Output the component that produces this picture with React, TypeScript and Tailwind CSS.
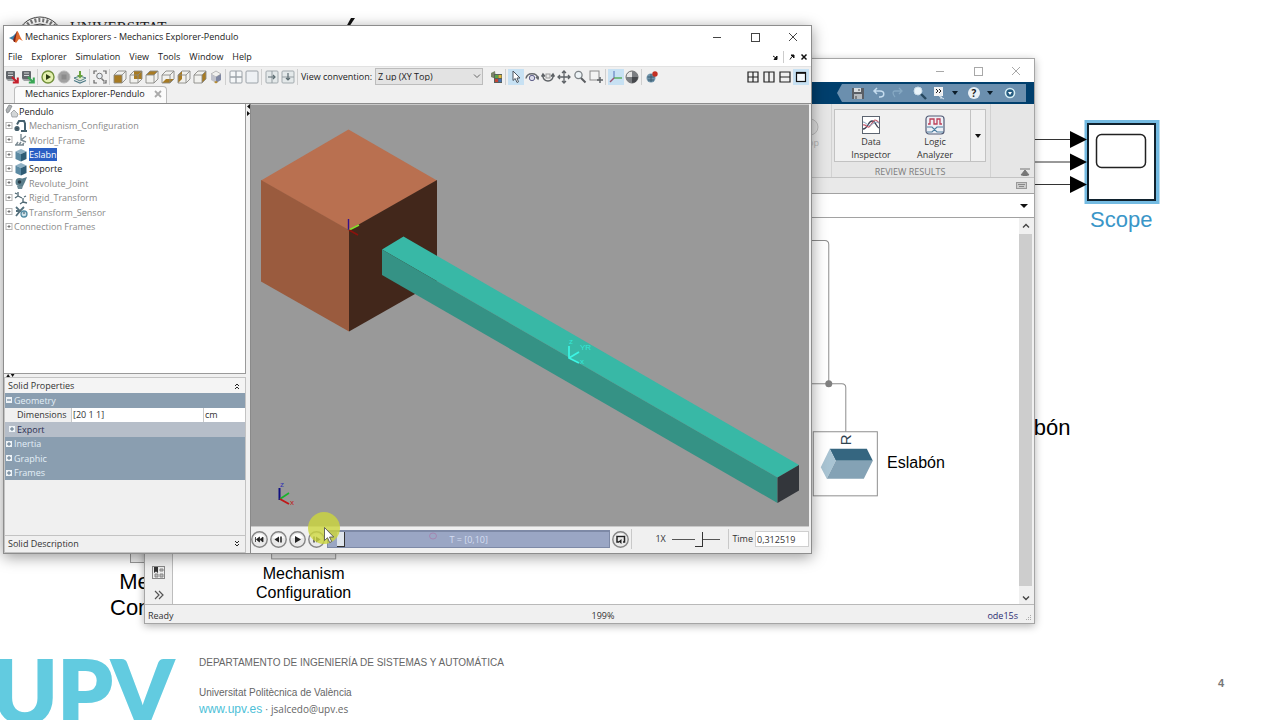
import React from "react";

const uiFont = "font-['Open_Sans','Noto_Sans',sans-serif]";

/* ---------- small building blocks ---------- */

function Tool({ label, active, children }: { label: string; active?: boolean; children: React.ReactNode }) {
  return (
    <button
      type="button"
      aria-label={label}
      className={
        active
          ? "size-3.5 shrink-0 bg-[#c7e1f3] shadow-[0_0_0_1px_#c7e1f3]"
          : "size-3.5 shrink-0"
      }
    >
      <svg viewBox="0 0 14 14" className="block size-3.5" fill="none">
        {children}
      </svg>
    </button>
  );
}

function Sep() {
  return <span className="h-4 w-0.5 shrink-0 border-l border-[#cfcfcf]" />;
}

function ViewCube({ face }: { face: "front" | "back" | "top" | "bottom" | "left" | "right" }) {
  const gold = "#a87b22";
  const shape = {
    front: "1,5 9,5 9,13 1,13",
    back: "5,1 13,1 13,9 5,9",
    top: "1,5 5,1 13,1 9,5",
    bottom: "1,13 5,9 13,9 9,13",
    left: "1,5 5,1 5,9 1,13",
    right: "9,5 13,1 13,9 9,13",
  }[face];
  return (
    <g>
      <path d="M1 5 5 1H13V9L9 13H1Z" fill="#f1f1ee" />
      <polygon points={shape} fill={gold} />
      <path d="M1 5H9V13H1ZM1 5 5 1H13V9L9 13M9 5 13 1" stroke="#8b8a86" strokeWidth=".9" />
    </g>
  );
}

function SaveBlock({ red }: { red?: boolean }) {
  return (
    <g>
      <rect x="1" y="1" width="9" height="8" rx="1" fill="#62666b" />
      <path d="M3 3h5M3 5.5h5" stroke="#d4d6d8" />
      <path d="M1 9h8l2 2H3Z" fill="#9ea1a3" />
      {red ? (
        <path d="m7 7 5 5m.8-4.5v5h-5" stroke="#c5202c" strokeWidth="2" />
      ) : (
        <path d="m7 7 5 5m.8-4.5v5h-5" stroke="#3aa655" strokeWidth="2" />
      )}
    </g>
  );
}

function Expander() {
  return (
    <svg viewBox="0 0 8 8" className="size-2 shrink-0" fill="none">
      <rect x="1" y=".5" width="6" height="6" fill="#fff" stroke="#b5b5b5" />
      <path d="M2.500 3.500h3M4 2v3" stroke="#6c6c6c" strokeWidth=".9" />
    </svg>
  );
}

function MatlabMark() {
  return (
    <svg viewBox="0 0 14 14" className="size-3.5 shrink-0">
      <path d="M0 8 4 6 6 4 8 2 7 8 4 10Z" fill="#3c7fa8" />
      <path d="M4 10 8 1 10 5 7 12 5 12Z" fill="#7c2018" />
      <path d="M8 1C10 2 11 8 14 11L10 9 7 13 6 12Z" fill="#e0692b" />
    </svg>
  );
}

function WindowButtons({ faded }: { faded?: boolean }) {
  const tone = faded ? "text-[#a8a8a8]" : "text-[#444]";
  const btn = "flex size-3 items-center justify-center";
  return (
    <div className={`flex items-center gap-[26px] ${tone}`}>
      <button type="button" aria-label="Minimize" className={btn}>
        <svg viewBox="0 0 12 12" className="size-3" stroke="currentColor"><path d="M2 6.5h8" /></svg>
      </button>
      <button type="button" aria-label="Maximize" className={btn}>
        <svg viewBox="0 0 12 12" className="size-3" stroke="currentColor" fill="none"><rect x="2.5" y="2.5" width="8" height="8" /></svg>
      </button>
      <button type="button" aria-label="Close" className={btn}>
        <svg viewBox="0 0 12 12" className="size-3" stroke="currentColor"><path d="m2 2 8 8m0-8-8 8" /></svg>
      </button>
    </div>
  );
}

/* ---------- tree ---------- */

function SolidIcon() {
  return (
    <g>
      <path d="m1.500 3.500 5.500-2.500 5.500 2.500L7 6Z" fill="#8fb1c4" />
      <path d="M1.500 3.500 7 6v7.500L1.500 11Z" fill="#5b8aa3" />
      <path d="m7 6 5.500-2.500V11L7 13.500Z" fill="#2f5c75" />
    </g>
  );
}

const treeIcons: Record<string, React.ReactNode> = {
  config: (
    <g stroke="#46616e" strokeWidth="2">
      <path d="M3 5.5 5 2h5l1 2.5V12M7 12h6" />
      <circle cx="3" cy="9.5" r="1.6" fill="#333" />
    </g>
  ),
  frame: (
    <g stroke="#7b8a92" strokeWidth="1.4">
      <path d="M7 1v6l5 2M7 7l5-4M1 12h9M2 12l2-3M5 12l2-3M8 12l2-2" />
    </g>
  ),
  solid: <SolidIcon />,
  joint: (
    <g>
      <path d="m7 3 6-2-2 5-2 4H5Z" fill="#587d8b" />
      <circle cx="5.5" cy="6" r="4" fill="#5b7f8c" />
      <circle cx="5.5" cy="6" r="1.8" fill="#263a45" />
      <path d="M3 10h6l-1 3H4Z" fill="#6d8b96" />
    </g>
  ),
  rigid: (
    <g stroke="#4f6873" strokeWidth="1.3">
      <path d="M4 1v4l-3 2m3-2 4 2M9 7v4l-3 2m3-2 4 1M1 2l2 1M10 6l2-1" />
    </g>
  ),
  sensor: (
    <g stroke="#54707d" strokeWidth="1.3">
      <path d="M2 2l4 4-4 5M2 6h5M6 6l4-4" strokeWidth="1.8" />
      <circle cx="10" cy="9" r="3" fill="#cfe2ea" stroke="#4f8aa3" />
      <path d="M10 9V7" />
    </g>
  ),
};

const treeRows = [
  { name: "Mechanism_Configuration", icon: "config" },
  { name: "World_Frame", icon: "frame" },
  { name: "Eslabn", icon: "solid", selected: true },
  { name: "Soporte", icon: "solid", dark: true },
  { name: "Revolute_Joint", icon: "joint" },
  { name: "Rigid_Transform", icon: "rigid" },
  { name: "Transform_Sensor", icon: "sensor" },
  { name: "Connection Frames" },
];

function ModelTree() {
  return (
    <ul className="grid h-[130px] auto-rows-fr pl-px text-[9px] leading-none text-[#8a8a8a]">
      <li className="flex items-center text-[#222]">
        <svg viewBox="0 0 14 14" className="size-3.5" fill="none">
          <path d="M1 6 4 1l3 1-3 6-2 1Z" fill="#aeb2b4" stroke="#7b7f82" strokeWidth=".7" />
          <path d="m6 9 3-3 4 4-1 3H7Z" fill="#d3d6d7" stroke="#8a8e90" strokeWidth=".7" />
        </svg>
        Pendulo
      </li>
      {treeRows.map((row) => (
        <li key={row.name} className="flex items-center gap-px">
          <Expander />
          {row.icon && (
            <svg viewBox="0 0 14 14" className="size-3.5 shrink-0" fill="none">
              {treeIcons[row.icon]}
            </svg>
          )}
          <span
            className={
              row.selected
                ? "bg-[#2a5fc4] py-0.5 text-white"
                : row.dark
                  ? "text-[#1c1c1c]"
                  : ""
            }
          >
            {row.name}
          </span>
        </li>
      ))}
    </ul>
  );
}

/* ---------- properties ---------- */

function GroupMark({ open }: { open?: boolean }) {
  return (
    <svg viewBox="0 0 6 6" className="size-1.5 shrink-0">
      <rect width="6" height="6" fill="#eef3f7" />
      <path d={open ? "M1 3h4" : "M1 3h4M3 1v4"} stroke="#5c7489" />
    </svg>
  );
}

function Group({ name, open }: { name: string; open?: boolean }) {
  return (
    <button type="button" className="flex w-full items-center gap-0.5 bg-[#8a9eb0] pl-px text-left text-[#e3eef7]">
      <GroupMark open={open} />
      {name}
    </button>
  );
}

function SolidProperties() {
  return (
    <section className="flex grow flex-col border border-[#c3c3c3] text-[9px] leading-none text-[#333]">
      <h2 className="flex h-[15px] items-center justify-between bg-[#f4f4f4] px-[3px]">
        Solid Properties
        <svg viewBox="0 0 6 6" className="mr-0.5 size-1.5" fill="none" stroke="#222"><path d="m1 3 2-2 2 2M1 6l2-2 2 2" /></svg>
      </h2>
      <div className="grid h-[87px] auto-rows-fr">
        <Group name="Geometry" open />
        <div className="flex items-stretch bg-white">
          <label htmlFor="dims" className="flex w-[67px] items-center border-r border-[#c9c9c9] bg-[#f0f0f0] pl-3">
            Dimensions
          </label>
          <input id="dims" defaultValue="[20 1 1]" className="w-0 min-w-0 grow px-px text-[9px] leading-none outline-none" />
          <span className="flex w-[42px] items-center border-l border-[#c9c9c9] pl-px">cm</span>
        </div>
        <button type="button" className="flex items-center gap-0.5 bg-[#b6bec9] pl-1 text-left text-[#2d2f52]">
          <GroupMark />
          Export
        </button>
        <Group name="Inertia" />
        <Group name="Graphic" />
        <Group name="Frames" />
      </div>
      <div className="grow" />
      <h2 className="flex h-[17px] items-center justify-between border-t border-[#c3c3c3] px-[3px] pb-px">
        Solid Description
        <svg viewBox="0 0 6 6" className="mr-0.5 size-1.5" fill="none" stroke="#222"><path d="m1 0 2 2 2-2M1 3l2 2 2-2" /></svg>
      </h2>
    </section>
  );
}

/* ---------- 3-D view ---------- */

function Scene() {
  return (
    <svg viewBox="251 105 558 421" preserveAspectRatio="xMinYMin slice" className="block size-full bg-[#999]" fill="none">
      <polygon points="348.5,129.5 437,180.5 349,230.5 261,180.5" fill="#b97050" />
      <polygon points="261,180 349,230 349,331.5 261,281.5" fill="#9a5b3e" />
      <polygon points="349,230 437,180 437,281.5 349,331.5" fill="#42271b" />
      <path d="M348.5 219v11" stroke="#35108a" strokeWidth="1.4" />
      <path d="m349 230 10-5" stroke="#83e22c" strokeWidth="1.6" />
      <path d="m349 230 9 5" stroke="#8c120c" strokeWidth="1.6" />
      <polygon points="403.5,236.5 799,465 777.5,477.5 382,249.5" fill="#38b8a6" />
      <polygon points="382,249.5 777.5,477.5 777.5,503 382,275" fill="#359285" />
      <polygon points="777.5,477.5 799,465 799,490.5 777.5,503" fill="#33363b" />
      <g stroke="#3df5e4" strokeWidth="1.700">
        <path d="M569 346v12l10 5M569 358l10-6" />
      </g>
      <g fill="#35e6d6" fontSize="8" fontFamily="Liberation Sans, sans-serif">
        <text x="569" y="344">z</text>
        <text x="580" y="350">YR</text>
        <text x="580" y="364">x</text>
      </g>
      <path d="M279.500 488v12" stroke="#101080" strokeWidth="2" />
      <path d="m280 499 9-6" stroke="#17b32a" strokeWidth="1.6" />
      <path d="m280 499 9 5" stroke="#c01818" strokeWidth="2" />
      <g fontSize="8" fontFamily="Liberation Sans, sans-serif">
        <text x="280" y="487" fill="#3434b4">z</text>
        <text x="290" y="505" fill="#c01818">x</text>
      </g>
    </svg>
  );
}

function RoundButton({ label, children }: { label: string; children: React.ReactNode }) {
  return (
    <button type="button" aria-label={label} className="size-[17px] shrink-0">
      <svg viewBox="0 0 17 17" className="block size-[17px]">
        <circle cx="8.500" cy="8.500" r="7.700" fill="#e9e9e9" stroke="#858585" strokeWidth="1.400" />
        <path d="M3 7a5.800 5.800 0 0 1 11 0Z" fill="#fff" />
        {children}
      </svg>
    </button>
  );
}

function Playback() {
  return (
    <div className="flex h-[26px] items-center bg-[#f0f0f0] pb-0.5 text-[9px] text-[#333]">
      <div className="flex gap-0.5">
        <RoundButton label="Go to start">
          <path d="M4.500 6v5M8.500 6v5L5.500 8.500ZM12 6v5L9 8.500Z" fill="#222" stroke="#222" strokeWidth=".8" />
        </RoundButton>
        <RoundButton label="Step back">
          <path d="M9 5.500v6L4.500 8.500Z" fill="#222" />
          <path d="M11 5.500v6" stroke="#222" strokeWidth="1.500" />
        </RoundButton>
        <RoundButton label="Play">
          <path d="M6 5v7l6-3.500Z" fill="#222" />
        </RoundButton>
        <RoundButton label="Step forward">
          <path d="M8 5.500v6l4.500-3Z" fill="#444" />
          <path d="M6 5.500v6" stroke="#444" strokeWidth="1.500" />
        </RoundButton>
      </div>
      <div className="relative ml-0.5 h-[18px] grow border border-t-2 border-[#7d89a6] bg-[#9aa6c4]">
        <input
          type="range"
          aria-label="Simulation time"
          min="0"
          max="10"
          step="0.001"
          defaultValue="0.313"
          className="block h-full w-full appearance-none bg-transparent [&::-webkit-slider-thumb]:h-[15px] [&::-webkit-slider-thumb]:w-2 [&::-webkit-slider-thumb]:appearance-none [&::-webkit-slider-thumb]:border-r [&::-webkit-slider-thumb]:border-b [&::-webkit-slider-thumb]:border-[#333] [&::-webkit-slider-thumb]:bg-[#dfe5ec]"
        />
        <span className="pointer-events-none absolute inset-0 flex items-center justify-center text-[9px] text-[#d5def2]">
          T = [0,10]
        </span>
        <svg viewBox="0 0 8 8" className="pointer-events-none absolute top-0 left-[36%] size-2" fill="none">
          <ellipse cx="4" cy="4" rx="3.500" ry="3" stroke="#a486b0" />
        </svg>
      </div>
      <span className="ml-0.5 flex h-5 items-center border-r border-[#c9c9c9] pr-0.5">
        <RoundButton label="Loop">
          <path d="M7 11H5V5.500h7.500V11H11" fill="none" stroke="#222" strokeWidth="1.500" />
          <path d="M9.500 8 6.500 10.500l3 2.500Z" fill="#222" />
        </RoundButton>
      </span>
      <label htmlFor="speed" className="ml-[23px] w-[17px]">1X</label>
      <input
        id="speed"
        type="range"
        defaultValue="56"
        className="h-4 w-12 appearance-none bg-[linear-gradient(#555,#555)] bg-[length:100%_1px] bg-center bg-no-repeat [&::-webkit-slider-thumb]:h-[15px] [&::-webkit-slider-thumb]:w-2 [&::-webkit-slider-thumb]:appearance-none [&::-webkit-slider-thumb]:border-r [&::-webkit-slider-thumb]:border-b [&::-webkit-slider-thumb]:border-[#333] [&::-webkit-slider-thumb]:bg-[#f0f0f0]"
      />
      <div className="ml-2 flex h-5 items-center gap-0.5 border-l border-[#c9c9c9] pl-[3px]">
        <label htmlFor="time">Time</label>
        <input id="time" defaultValue="0,312519" className="h-4 w-[54px] border border-[#cfcfcf] bg-white px-px text-[9px] leading-none outline-none" />
      </div>
    </div>
  );
}

/* ---------- Mechanics Explorers window ---------- */

function Toolbar() {
  return (
    <div className="flex h-5 shrink-0 items-center gap-0.5 border-t border-[#e2e2e2] bg-[#f0f0f0] pr-[3px] pl-px">
      <Tool label="Disconnect"><SaveBlock red /></Tool>
      <Tool label="Update"><SaveBlock /></Tool>
      <Sep />
      <Tool label="Run">
        <circle cx="7" cy="7" r="6" fill="#e3f0ae" stroke="#71903a" strokeWidth="1.400" />
        <path d="M5 4v6l5-3Z" fill="#2c3d14" />
      </Tool>
      <Tool label="Stop">
        <circle cx="7" cy="7" r="6" fill="#a1a1a1" stroke="#b8b8b8" />
        <rect x="4.500" y="4.500" width="5" height="5" fill="#8b8b8b" />
      </Tool>
      <Tool label="Import">
        <path d="M1 8l6-2 6 2-6 3Z" fill="#dde9d0" stroke="#54808a" />
        <path d="M1 10.500 7 13l6-2.500" stroke="#4d7a86" strokeWidth="1.300" />
        <path d="M6 1h2v4h2L7 8.500 4 5h2Z" fill="#69a33c" />
      </Tool>
      <Sep />
      <Tool label="Fit to view">
        <path d="M1 4V1h3M10 1h3v3M13 10v3h-3M4 13H1v-3" stroke="#666" strokeWidth="1.200" />
        <circle cx="6.500" cy="6" r="2.800" stroke="#777" fill="#e9eff4" />
        <path d="m8.500 8.500 3 3" stroke="#777" strokeWidth="1.500" />
      </Tool>
      <Sep />
      <Tool label="Front view"><ViewCube face="front" /></Tool>
      <Tool label="Back view"><ViewCube face="back" /></Tool>
      <Tool label="Top view"><ViewCube face="top" /></Tool>
      <Tool label="Bottom view"><ViewCube face="bottom" /></Tool>
      <Tool label="Left view"><ViewCube face="left" /></Tool>
      <Tool label="Right view"><ViewCube face="right" /></Tool>
      <Tool label="Isometric view">
        <path d="m2 4 5-3 5 3-5 3Z" fill="#f0f0ee" stroke="#a0a0a0" strokeWidth=".7" />
        <path d="M2 4 7 7v6L2 10Z" fill="#bfc1ca" />
        <path d="m7 7 5-3v6l-5 3Z" fill="#7f87a2" />
        <path d="m5 12 2-1 2 1-2 1.500Z" fill="#b68b2e" />
      </Tool>
      <Sep />
      <Tool label="Split view">
        <rect x="1" y="1" width="12" height="12" rx="1" fill="#f5f7f8" stroke="#9ba2a8" />
        <path d="M7 1v12M1 7h12" stroke="#9ba2a8" strokeWidth="1.300" />
      </Tool>
      <Tool label="Single view">
        <rect x="1" y="1" width="12" height="12" rx="1" fill="#eef1f4" stroke="#9ba2a8" />
      </Tool>
      <Sep />
      <Tool label="Split right">
        <rect x="1" y="1" width="12" height="12" rx="1" fill="#e4e9ea" stroke="#a3abaf" />
        <path d="M7 1v12" stroke="#949da2" />
        <path d="M3 7h7M8 5l2 2-2 2" stroke="#5d6d72" strokeWidth="1.200" />
      </Tool>
      <Tool label="Split down">
        <rect x="1" y="1" width="12" height="12" rx="1" fill="#e4e9ea" stroke="#a3abaf" />
        <path d="M1 7h12" stroke="#949da2" />
        <path d="M7 3v7M5 8l2 2 2-2" stroke="#5d6d72" strokeWidth="1.200" />
      </Tool>
      <Sep />
      <label htmlFor="convention" className="w-[72px] whitespace-nowrap text-[9px]">View convention:</label>
      <div className="relative w-[108px]">
        <select
          id="convention"
          className="block h-[17px] w-full appearance-none border border-[#bcbcbc] bg-[#e3e3e3] pl-0.5 text-[9px] leading-none text-[#222]"
        >
          <option>Z up (XY Top)</option>
        </select>
        <svg viewBox="0 0 8 8" className="pointer-events-none absolute top-1 right-0.5 size-2" fill="none" stroke="#666"><path d="m1 2.500 3 3 3-3" /></svg>
      </div>
      <span className="w-0.5" />
      <Tool label="Visual properties">
        <path d="m2 3 4-2 1 8-5-2Z" fill="#7a8468" />
        <rect x="5" y="4" width="8" height="9" fill="#59605a" />
        <rect x="6" y="5" width="3" height="3" fill="#5ba544" />
        <rect x="9.500" y="5" width="3" height="3" fill="#dfb63a" />
        <rect x="6" y="9" width="3" height="3" fill="#c64535" />
        <rect x="9.500" y="9" width="3" height="3" fill="#4671ae" />
      </Tool>
      <Sep />
      <Tool label="Select" active>
        <path d="M4 1v9.500l2.200-2L8 12.500l1.500-.7L8 8h3Z" fill="#fff" stroke="#4b5560" />
      </Tool>
      <Tool label="Rotate">
        <path d="M1 8.500C2 2 12 2 13 8.500M11 7l2 2 1-2.500" stroke="#666a6f" strokeWidth="1.500" />
        <circle cx="7" cy="8" r="2.700" fill="#d9dae9" stroke="#62628c" />
      </Tool>
      <Tool label="Roll">
        <path d="M2 5c-1 8 11 8 10 0M.500 6.500 2 4l2 2.500M10 6.500 12 4l1.500 2.500" stroke="#5e6266" strokeWidth="1.500" />
        <rect x="5" y="4" width="4" height="4" fill="#e9e9e9" stroke="#999" />
      </Tool>
      <Tool label="Pan">
        <path d="M7 1v12M1 7h12M5 3l2-2 2 2M5 11l2 2 2-2M3 5 1 7l2 2M11 5l2 2-2 2" stroke="#5e6266" strokeWidth="1.300" />
      </Tool>
      <Tool label="Zoom">
        <circle cx="5.500" cy="5" r="3.600" fill="#edf3f6" stroke="#7d8286" strokeWidth="1.300" />
        <path d="m8 8 4.500 4.500" stroke="#5a5d60" strokeWidth="2" />
      </Tool>
      <Tool label="Zoom to region">
        <rect x="1" y="1" width="9" height="9" fill="#f3f3f3" stroke="#8b8b8b" />
        <path d="M11 7v6M8 10h6" stroke="#5f6367" strokeWidth="1.500" />
      </Tool>
      <Sep />
      <Tool label="Show frames" active>
        <path d="M5 1v7" stroke="#5272b8" />
        <path d="M5 8h8" stroke="#4dab4a" strokeWidth="1.300" />
        <path d="m5 8-4 4" stroke="#9a5470" strokeWidth="1.500" />
      </Tool>
      <Tool label="Show centers of mass">
        <circle cx="7" cy="7" r="6" fill="#e5e5e5" stroke="#6a6a6a" />
        <path d="M7 7V1a6 6 0 0 1 6 6ZM7 7v6a6 6 0 0 1-6-6Z" fill="#7b7e82" />
        <path d="M7 7h6a6 6 0 0 1-6 6Z" fill="#45484c" />
      </Tool>
      <Sep />
      <Tool label="Record">
        <circle cx="6" cy="8" r="4.500" fill="#6f93aa" />
        <path d="M2.500 7h7M6 4v8M3 10h6" stroke="#3b5c70" />
        <circle cx="10" cy="4" r="2.700" fill="#c22f22" />
      </Tool>
      <div className="grow" />
      <Tool label="Four panes">
        <path d="M2 2h10v10H2ZM7 2v10M2 7h10" stroke="#222" strokeWidth="1.200" />
      </Tool>
      <Tool label="Two columns">
        <path d="M2 2h10v10H2ZM7 2v10" stroke="#222" strokeWidth="1.200" />
      </Tool>
      <Tool label="Two rows">
        <path d="M2 2h10v10H2ZM2 7h10" stroke="#222" strokeWidth="1.200" />
      </Tool>
      <Tool label="One pane" active>
        <rect x="2.500" y="2.500" width="9" height="9" fill="#f4fafe" stroke="#111" strokeWidth="1.200" />
        <path d="M2 3h10" stroke="#111" strokeWidth="1.600" />
      </Tool>
    </div>
  );
}

function ExplorerWindow() {
  const menus = ["File", "Explorer", "Simulation", "View", "Tools", "Window", "Help"];
  return (
    <section className={`absolute top-[25px] left-[3px] flex h-[529px] w-[809px] flex-col border border-[#8d8d8d] bg-[#f0f0f0] text-[#222] shadow-[0_3px_14px_rgba(0,0,0,0.4)] ${uiFont}`}>
      <header className="flex h-[22px] shrink-0 items-center justify-between bg-white pr-3 pl-[5px]">
        <h1 className="flex items-center gap-0.5 text-[9px]">
          <MatlabMark />
          Mechanics Explorers - Mechanics Explorer-Pendulo
        </h1>
        <WindowButtons />
      </header>
      <nav className="flex h-[18px] shrink-0 items-center justify-between bg-white pr-[3px] pl-1 text-[9px]">
        <div className="flex gap-[9px]">
          {menus.map((m) => (
            <button type="button" key={m}>{m}</button>
          ))}
        </div>
        <div className="flex items-center gap-1">
          <button type="button" aria-label="Dock"><svg viewBox="0 0 8 8" className="size-2"><path d="m2 3 3 2M6 3v3.500H3Z" fill="#111" stroke="#111" /></svg></button>
          <span className="h-3 border-l border-[#ccc]" />
          <button type="button" aria-label="Undock"><svg viewBox="0 0 8 8" className="size-2"><path d="m2 6.500 2-3M3 2h3v3Z" fill="#111" stroke="#111" /></svg></button>
          <button type="button" aria-label="Close tab group"><svg viewBox="0 0 8 8" className="size-2"><path d="m1.500 1.500 5 5m0-5-5 5" stroke="#111" strokeWidth="1.500" /></svg></button>
        </div>
      </nav>
      <Toolbar />
      <div className="flex h-[17px] shrink-0 items-end pl-2.5 text-[9px]">
        <div className="flex h-[17px] w-[153px] items-center justify-between rounded-t-sm border border-b-0 border-[#bdbdbd] bg-[#fbfbfb] pr-1 pb-0.5 pl-2.5">
          Mechanics Explorer-Pendulo
          <button type="button" aria-label="Close tab"><svg viewBox="0 0 8 8" className="size-2"><path d="m1 1 6 6m0-6-6 6" stroke="#aaa" strokeWidth="1.800" /></svg></button>
        </div>
      </div>
      <div className="flex min-h-0 grow border-t border-[#8c8c8c]">
        <aside className="flex w-[242px] shrink-0 flex-col">
          <div className="h-[270px] shrink-0 border-r border-b border-[#9a9a9a] bg-white">
            <ModelTree />
          </div>
          <svg viewBox="0 0 12 4" className="h-[3px] w-3 shrink-0"><path d="M1 4 3.500 0 6 4ZM7 0h5L9.500 4Z" fill="#111" /></svg>
          <SolidProperties />
        </aside>
        <svg viewBox="0 0 4 12" className="h-3 w-1 shrink-0"><path d="M4 0v5L1 2.500ZM1 7l3 2.500L1 12Z" fill="#111" /></svg>
        <div className="flex min-w-0 grow flex-col border-l border-[#8a8a8a] pr-0.5">
          <div className="min-h-0 grow border-t border-b border-[#c9c9c9]">
            <Scene />
          </div>
          <Playback />
        </div>
      </div>
    </section>
  );
}

/* ---------- Simulink window ---------- */

function QuickAccess() {
  return (
    <div className="flex h-[22px] shrink-0 items-center justify-end bg-[#003f6d] pr-2">
      <div className="flex h-[18px] w-[189px] items-center bg-[#6b8fae] pl-[13px] [clip-path:polygon(5px_0,100%_0,100%_100%,5px_100%,0_50%)]">
        <svg viewBox="0 0 176 16" className="h-4 w-[176px]" fill="none">
          <path d="M2 3h12v11H2Z" fill="#5a5f66" /><path d="M4 3h7v4H4Z" fill="#d9dde0" /><path d="M4 9h8v5H4Z" fill="#b4b9be" /><path d="M9 4v2M6 11v3" stroke="#444" />
          <path d="M25 6h5c5 0 5 6 0 6h-1M27 3l-3 3 3 3" stroke="#c5dcee" strokeWidth="1.500" />
          <path d="M51 6h-6c-3 0-2 4 0 6M49 3l3 3-3 3" stroke="#86a9c3" strokeWidth="1.300" />
          <circle cx="68" cy="6" r="4" fill="#eaf4fa" stroke="#c9dce8" /><path d="m71 9 5 5" stroke="#27485f" strokeWidth="2.400" />
          <rect x="84" y="2" width="9" height="9" fill="#f3f3f3" /><path d="m86 4 2 2-2 2m3-4 2 2-2 2" stroke="#222" /><path d="M91 8v6m-2-3 5 3" stroke="#d8e5ee" />
          <path d="M102 6h6l-3 4Z" fill="#0b1c28" />
          <circle cx="124" cy="8" r="6" fill="#e8f0f6" />
          <path d="M137 6h6l-3 4Z" fill="#0b1c28" />
          <circle cx="160" cy="8" r="4.500" fill="#245b80" stroke="#d6edf3" strokeWidth="1.600" /><path d="M158 7h4l-2 3Z" fill="#fff" />
          <text x="124" y="12" textAnchor="middle" fontSize="10" fontWeight="700" fill="#222" fontFamily="Open Sans, sans-serif">?</text>
        </svg>
      </div>
    </div>
  );
}

function Ribbon() {
  return (
    <div className="flex h-[74px] shrink-0 justify-end border-b border-[#c4c4c4] bg-[#e6e6e6] text-[9px] leading-[13px] text-[#333]">
      <button type="button" disabled className="flex w-8 flex-col items-end pt-3.5 pr-3 text-[#b5b5b5]">
        <svg viewBox="0 0 18 18" className="size-[18px]"><circle cx="9" cy="9" r="8" fill="#ddd" stroke="#bbb" /></svg>
        <span>Stop</span>
      </button>
      <div className="flex w-[160px] flex-col items-center border-x border-[#d2d2d2] pt-[5px] pr-0.5">
        <div className="flex h-[55px] w-[152px] border border-[#c2c2c2] bg-[#f0f0f0]">
          <button type="button" className="flex w-[72px] flex-col items-center pt-[5px]">
            <svg viewBox="0 0 20 20" className="size-5" fill="none">
              <rect x="1.500" y="1.500" width="17" height="17" fill="#fff" stroke="#5c6470" />
              <path d="M2 14c5 0 5-8 9-8s4 6 7 7" stroke="#3d3f52" strokeWidth="1.300" />
              <path d="M2 10c3-1 4 3 6 2s4-7 6-7 3 2 4 3" stroke="#c45569" strokeWidth="1.200" />
              <path d="M2 7c3 0 5 5 8 3s5-4 8-2" stroke="#8aa5bf" />
            </svg>
            <span>Data<br />Inspector</span>
          </button>
          <button type="button" className="flex w-[56px] flex-col items-center pt-[5px]">
            <svg viewBox="0 0 20 20" className="size-5" fill="none">
              <rect x="1" y="1" width="18" height="18" rx="3" fill="#eef0f6" stroke="#515a75" strokeWidth="1.200" />
              <path d="M3 9h2V4h4v5h3V4h3v5h2" stroke="#bd4058" strokeWidth="1.300" />
              <path d="M2 12h5l5 5h6M2 17h5l5-5h6" stroke="#4d7fa0" strokeWidth="1.200" />
            </svg>
            <span>Logic<br />Analyzer</span>
          </button>
          <button type="button" aria-label="More apps" className="ml-auto flex w-[15px] items-center justify-center border-l border-[#c2c2c2]">
            <svg viewBox="0 0 6 4" className="h-1 w-1.5"><path d="M0 0h6L3 4Z" fill="#111" /></svg>
          </button>
        </div>
        <span className="pt-[3px] text-[#7b7b7b]">REVIEW RESULTS</span>
      </div>
      <div className="flex w-[43px] items-end justify-end pr-1 pb-px">
        <button type="button" aria-label="Collapse ribbon">
          <svg viewBox="0 0 10 8" className="h-2 w-2.5"><path d="M0 1h10M5 2 9 7H1ZM3 7h4v1H3Z" fill="#777" stroke="#777" /></svg>
        </button>
      </div>
    </div>
  );
}

function Diagram() {
  return (
    <div className="relative min-w-0 grow overflow-hidden bg-white font-['Liberation_Sans',Arial,sans-serif] text-base leading-[19px] text-black">
      <svg viewBox="173 218 845 386" preserveAspectRatio="xMinYMin slice" className="absolute inset-0 size-full" fill="none">
        <path d="M800 240.500h24q4 0 4 4v139M800 383.500h41q4 0 4 4V432" stroke="#8d8d8d" />
        <circle cx="828" cy="383.500" r="3.500" fill="#808080" />
        <rect x="812.500" y="431.500" width="64" height="64" fill="#fff" stroke="#8f8f8f" />
        <polygon points="829,448.500 866,448.500 872,460.500 835,460.500" fill="#356680" />
        <polygon points="829,448.500 835,460.500 826,478.500 820,467" fill="#a9c4d3" />
        <polygon points="835,460.500 872,460.500 863,478.500 826,478.500" fill="#84a2b5" />
        <text transform="translate(850 445) rotate(-90)" fontSize="15" fill="#2f4450" fontFamily="Liberation Sans, sans-serif">R</text>
        <rect x="271.500" y="494.500" width="64" height="64" fill="#f0f0f0" stroke="#9a9a9a" />
      </svg>
      <p className="absolute top-[235px] left-[714px]">Eslabón</p>
      <p className="absolute top-[346px] left-[83px] text-center">Mechanism<br />Configuration</p>
    </div>
  );
}

function SimulinkWindow() {
  return (
    <section className={`absolute top-[58px] left-[144px] flex h-[566px] w-[891px] flex-col border border-[#a5a5a5] bg-[#f0f0f0] text-[#333] shadow-[0_2px_8px_rgba(0,0,0,0.3)] ${uiFont}`}>
      <header className="flex h-[23px] shrink-0 items-center justify-end bg-white pr-3">
        <WindowButtons faded />
      </header>
      <QuickAccess />
      <Ribbon />
      <div className="flex h-[15px] shrink-0 items-center justify-end bg-[#e9e9e9] pr-[7px]">
        <svg viewBox="0 0 11 7" className="h-[7px] w-[11px]"><rect x=".500" y=".500" width="10" height="6" fill="#ccc" stroke="#999" /><path d="M2 2.500h7M3 4.500h5" stroke="#888" /></svg>
      </div>
      <div className="flex h-[25px] shrink-0 items-center justify-end border-y border-[#a2a2a2] bg-white pr-1.5">
        <button type="button" aria-label="Model path">
          <svg viewBox="0 0 8 4" className="h-1 w-2"><path d="M0 0h8L4 4Z" fill="#111" /></svg>
        </button>
      </div>
      <div className="flex min-h-0 grow border-b border-[#b9b9b9]">
        <aside className="flex w-7 shrink-0 flex-col items-center justify-end gap-[11px] border-r border-[#bdbdbd] pb-1">
          <button type="button" aria-label="Library">
            <svg viewBox="0 0 13 13" className="size-[13px]" fill="none"><rect x=".500" y=".500" width="12" height="12" fill="#eee" stroke="#888" /><path d="M2 1h4v6L4 5.500 2 7Z" fill="#333" /><path d="M8 3h3v2H8ZM8 8h3v3H8ZM3 8h3v3H3Z" stroke="#888" fill="#bbb" /></svg>
          </button>
          <button type="button" aria-label="More tools">
            <svg viewBox="0 0 10 10" className="size-2.5" fill="none" stroke="#555" strokeWidth="1.200"><path d="m1 1 4 4-4 4M5 1l4 4-4 4" /></svg>
          </button>
        </aside>
        <Diagram />
        <div className="flex w-[13px] shrink-0 flex-col bg-[#cdcdcd]">
          <button type="button" aria-label="Scroll up" className="flex h-4 items-center justify-center bg-[#f0f0f0]">
            <svg viewBox="0 0 8 8" className="size-2" fill="none" stroke="#444" strokeWidth="1.400"><path d="m1 5.500 3-3 3 3" /></svg>
          </button>
          <span className="grow" />
          <button type="button" aria-label="Scroll down" className="flex h-[18px] items-center justify-center bg-[#f0f0f0] pt-1.5">
            <svg viewBox="0 0 8 8" className="size-2" fill="none" stroke="#444" strokeWidth="1.400"><path d="m1 2.500 3 3 3-3" /></svg>
          </button>
        </div>
        <span className="w-0.5" />
      </div>
      <footer className="flex h-[18px] shrink-0 items-center pt-1 pr-0.5 pl-[3px] text-[9px]">
        <span className="w-0 grow">Ready</span>
        <span className="ml-10">199%</span>
        <span className="w-0 grow pr-3 text-right text-[#2c2c72]">ode15s</span>
        <svg viewBox="0 0 6 6" className="mt-1 -ml-1 size-1.5"><path d="M4 0h1v1H4ZM2 2h1v1H2ZM4 2h1v1H4ZM0 4h1v1H0ZM2 4h1v1H2ZM4 4h1v1H4Z" fill="#aaa" /></svg>
      </footer>
    </section>
  );
}

/* ---------- slide behind the windows ---------- */

function SlideBackdrop() {
  return (
    <div className="font-['Liberation_Sans',Arial,sans-serif] text-[22px] leading-[26px] text-black">
      <svg viewBox="0 0 48 48" className="absolute top-4 left-4 size-12" fill="none" stroke="#444">
        <circle cx="24" cy="24" r="23" />
        <circle cx="24" cy="24" r="20" strokeWidth="4" strokeDasharray="2 2" stroke="#777" />
        <circle cx="24" cy="24" r="16" />
      </svg>
      <p className="absolute top-[17px] left-[70px] font-['Liberation_Serif',serif] text-[15px] leading-5 text-[#222]">UNIVERSITAT</p>
      <svg viewBox="0 0 12 10" className="absolute top-[18px] left-[345px] h-2.5 w-3"><path d="M6 0h4L4 9H1Z" fill="#111" /></svg>
      <svg viewBox="0 0 130 90" className="absolute top-[117px] left-[1032px] h-[90px] w-[130px]" fill="none">
        <path d="M0 22.500h40M0 45h40M0 67.500h40" stroke="#333" />
        <rect x="54.500" y="5" width="71" height="80" fill="#fff" stroke="#74bbe2" strokeWidth="4" />
        <rect x="56" y="7" width="67" height="76" stroke="#10222e" strokeWidth="2" />
        <rect x="64.500" y="17.500" width="49" height="33" rx="5" stroke="#222" strokeWidth="1.500" />
        <path d="M38 14v17l17-8.500ZM38 36.500v17L55 45ZM38 59v17l17-8.500Z" fill="#000" />
      </svg>
      <p className="absolute top-[207px] left-[1090px] text-[#3a96c8]">Scope</p>
      <p className="absolute top-[415px] left-[991px]">Eslabón</p>
      <div className="absolute top-[480px] left-[130px] size-[83px] border border-[#999] bg-[#eee]" />
      <p className="absolute top-[569px] left-[110px] text-center">Mechanism<br />Configuration</p>
    </div>
  );
}

function SlideFooter() {
  return (
    <footer className="absolute inset-x-0 bottom-0 flex h-[65px] items-start overflow-hidden font-['Liberation_Sans',Arial,sans-serif]">
      <strong className="-ml-2 w-[207px] shrink-0 font-['Lato',sans-serif] text-[88px] leading-[70px] font-black text-[#62cbe0] [-webkit-text-stroke:2px_#62cbe0]">UPV</strong>
      <div className="grow text-[10px] leading-[15px] text-[#666]">
        <p>DEPARTAMENTO DE INGENIERÍA DE SISTEMAS Y AUTOMÁTICA</p>
        <p className="pt-[15px]">Universitat Politècnica de València</p>
        <p className="leading-[18px]">
          <a href="https://www.upv.es" className="text-[12px] text-[#4dbfd8]">www.upv.es</a> ·{" "}
          <a href="mailto:jsalcedo@upv.es" className={uiFont}>jsalcedo@upv.es</a>
        </p>
      </div>
      <span className="pt-5 pr-14 text-[11px] leading-4 font-bold text-[#777]">4</span>
    </footer>
  );
}

export default function App() {
  return (
    <main className="relative min-h-screen w-full overflow-hidden bg-white">
      <SlideBackdrop />
      <SlideFooter />
      <SimulinkWindow />
      <ExplorerWindow />
      <svg viewBox="0 0 36 36" className="pointer-events-none absolute top-[510px] left-[306px] size-9">
        <circle cx="18" cy="18" r="16" fill="#ccd63c" opacity=".8" />
        <path d="M18.500 17.500v13l3-2.800 2.200 4.800 2-1-2.200-4.500h4.200Z" fill="#fff" stroke="#444" strokeWidth=".8" />
      </svg>
    </main>
  );
}
